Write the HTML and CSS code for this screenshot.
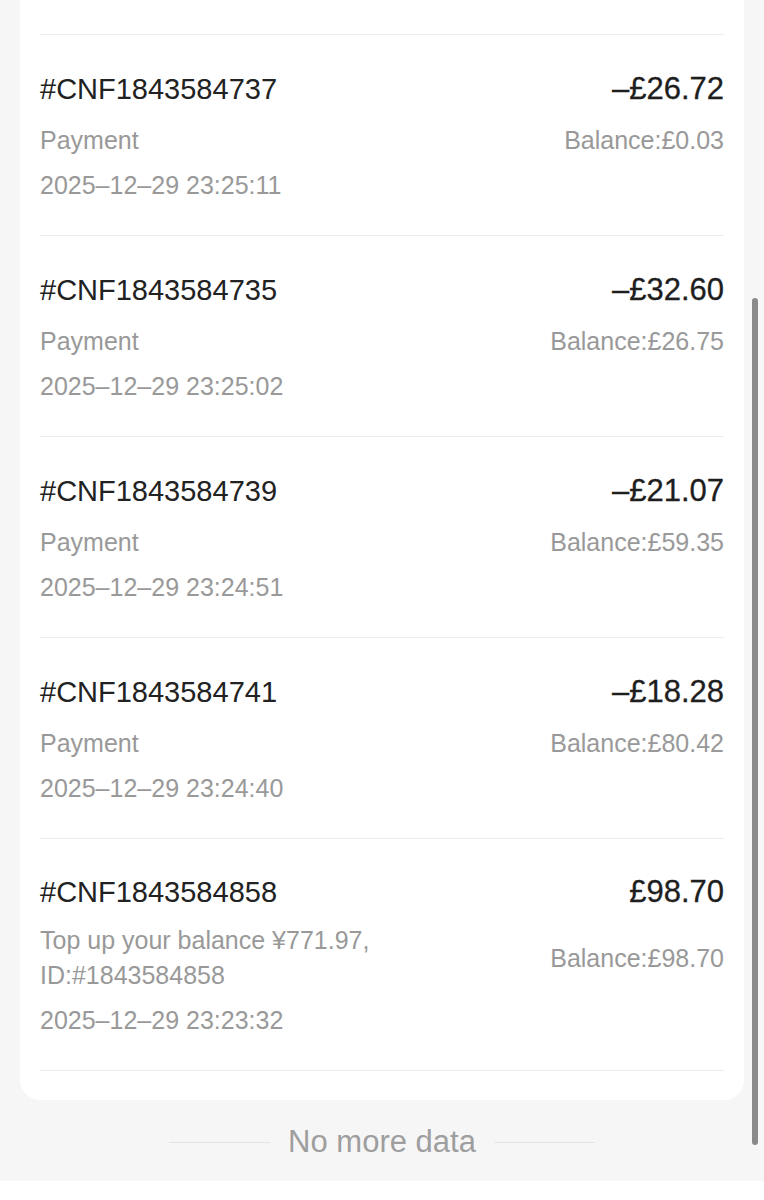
FILE: index.html
```html
<!DOCTYPE html>
<html lang="en">
<head>
<meta charset="utf-8">
<title>Balance records</title>
<link rel="stylesheet" href="styles.css">
</head>
<body>
<div class="page">
  <div class="card">
    <div class="row">
      <div class="top"><span class="id">#CNF1843584737</span><span class="amt">–£26.72</span></div>
      <div class="mid"><span class="desc">Payment</span><span class="bal">Balance:£0.03</span></div>
      <div class="date">2025–12–29 23:25:11</div>
    </div>
    <div class="row">
      <div class="top"><span class="id">#CNF1843584735</span><span class="amt">–£32.60</span></div>
      <div class="mid"><span class="desc">Payment</span><span class="bal">Balance:£26.75</span></div>
      <div class="date">2025–12–29 23:25:02</div>
    </div>
    <div class="row">
      <div class="top"><span class="id">#CNF1843584739</span><span class="amt">–£21.07</span></div>
      <div class="mid"><span class="desc">Payment</span><span class="bal">Balance:£59.35</span></div>
      <div class="date">2025–12–29 23:24:51</div>
    </div>
    <div class="row">
      <div class="top"><span class="id">#CNF1843584741</span><span class="amt">–£18.28</span></div>
      <div class="mid"><span class="desc">Payment</span><span class="bal">Balance:£80.42</span></div>
      <div class="date">2025–12–29 23:24:40</div>
    </div>
    <div class="row multi">
      <div class="top"><span class="id">#CNF1843584858</span><span class="amt">£98.70</span></div>
      <div class="mid"><span class="desc">Top up your balance ¥771.97, ID:#1843584858</span><span class="bal">Balance:£98.70</span></div>
      <div class="date">2025–12–29 23:23:32</div>
    </div>
    <div class="list-end"></div>
  </div>
  <div class="no-more">
    <span class="rule"></span>
    <span class="no-more-text">No more data</span>
    <span class="rule"></span>
  </div>
</div>
<div class="scrollbar"></div>
</body>
</html>
```

FILE: styles.css
```css
html, body {
  margin: 0;
  padding: 0;
  background: #ffffff;
}

body {
  font-family: "Liberation Sans", Arial, sans-serif;
  position: relative;
  min-height: 1200px;
}

.page {
  background: #f6f6f6;
  padding: 0 20px 18px;
}

.card {
  background: #ffffff;
  border-radius: 0 0 20px 20px;
  padding: 34px 20px 0;
}

.row {
  border-top: 1px solid #ededed;
  padding: 34px 0 32px;
}

.row.multi {
  padding-top: 33px;
}

.top {
  display: flex;
  justify-content: space-between;
  align-items: baseline;
  line-height: 40px;
}

.id {
  font-size: 29px;
  color: #222222;
}

.amt {
  font-size: 31px;
  color: #1e1e1e;
  -webkit-text-stroke: 0.3px #1e1e1e;
}

.mid {
  display: flex;
  justify-content: space-between;
  align-items: center;
  margin-top: 14px;
  font-size: 25px;
  line-height: 35px;
  color: #999999;
}

.multi .mid {
  margin-top: 11px;
}

.desc {
  max-width: 350px;
}

.bal {
  white-space: nowrap;
}

.date {
  margin-top: 10px;
  font-size: 25px;
  line-height: 35px;
  color: #999999;
}

.list-end {
  border-top: 1px solid #ededed;
  height: 29px;
}

.no-more {
  display: flex;
  justify-content: center;
  align-items: center;
  gap: 18px;
  margin-top: 21px;
  height: 42px;
}

.rule {
  width: 101px;
  height: 1px;
  background: #e4e4e4;
}

.no-more-text {
  font-size: 31px;
  color: #9e9e9e;
}

.scrollbar {
  position: absolute;
  left: 752px;
  top: 298px;
  width: 6px;
  height: 847px;
  border-radius: 3px;
  background: #8a8a8a;
}
```
